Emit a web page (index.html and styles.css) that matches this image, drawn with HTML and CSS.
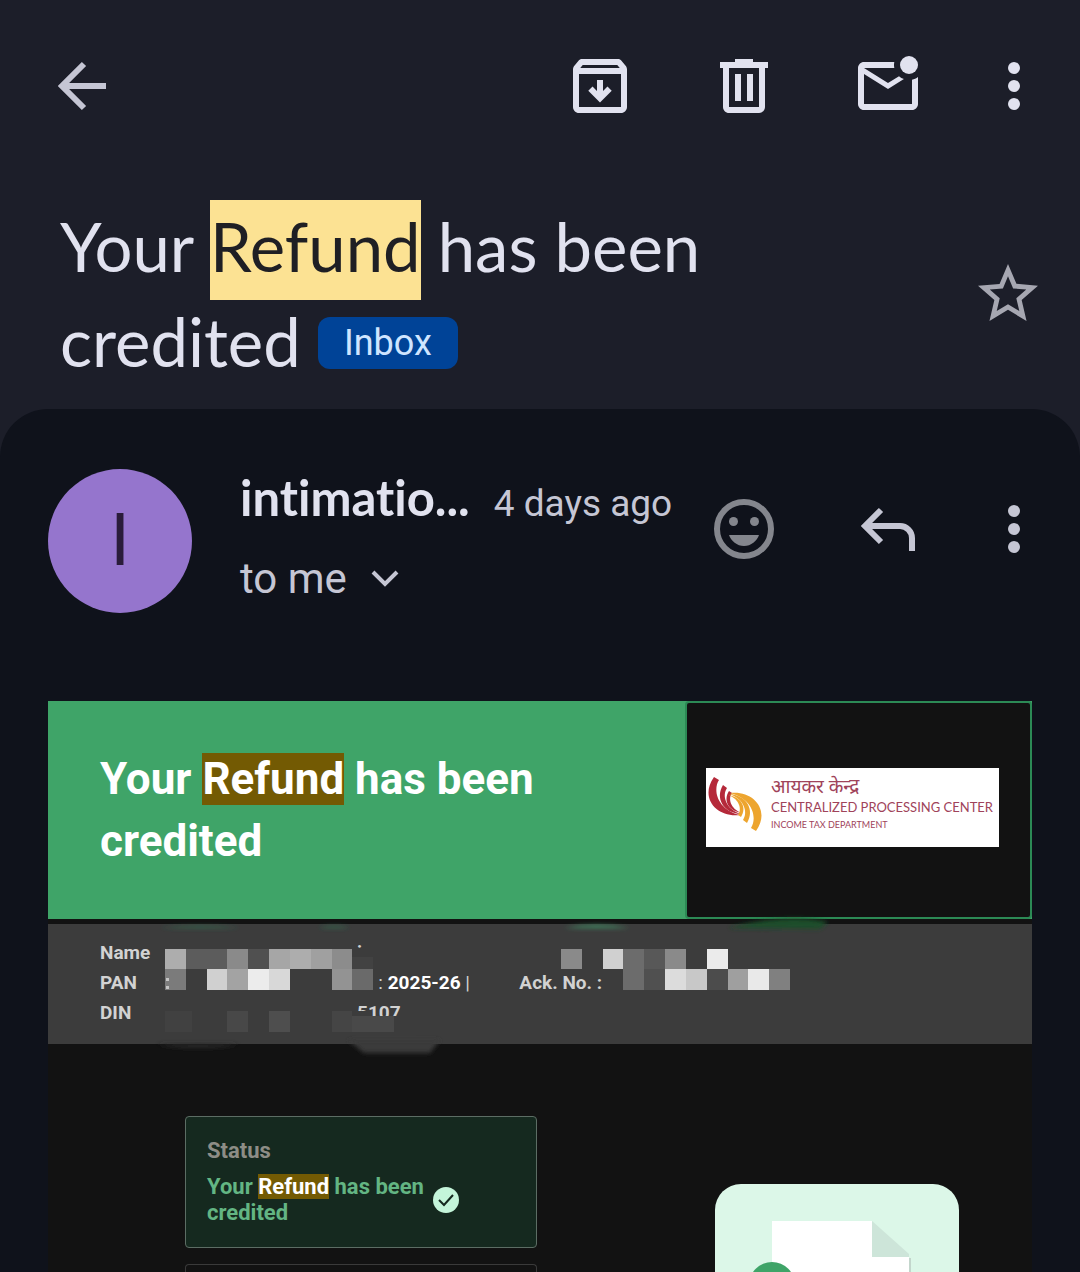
FILE: index.html
```html
<!DOCTYPE html>
<html lang="en">
<head>
  <meta charset="UTF-8">
  <meta name="viewport" content="width=device-width, initial-scale=1.0">
  <title>Your Refund has been credited</title>
  <link rel="stylesheet" href="styles.css">
</head>
<body>
  <header class="toolbar">
    <button class="icon-btn back" type="button" aria-label="Back">
      <svg viewBox="0 0 72 72" fill="none" stroke="currentColor" stroke-width="6"><path d="M58 36H15M36 14L14 36l22 22"/></svg>
    </button>
    <button class="icon-btn" type="button" aria-label="Archive">
      <svg viewBox="0 0 24 24" fill="currentColor"><path d="M20.54 5.23l-1.39-1.68C18.88 3.21 18.47 3 18 3H6c-.47 0-.88.21-1.16.55L3.46 5.23C3.17 5.57 3 6.02 3 6.5V19c0 1.1.9 2 2 2h14c1.1 0 2-.9 2-2V6.5c0-.48-.17-.93-.46-1.27zM6.24 5h11.52l.83 1H5.42l.82-1zM5 19V8h14v11H5z"/><path d="M12 10v6M8.8 12.9l3.2 3.2 3.2-3.2" fill="none" stroke="currentColor" stroke-width="2"/></svg>
    </button>
    <button class="icon-btn" type="button" aria-label="Delete">
      <svg viewBox="0 0 24 24" fill="currentColor"><path d="M15 4V3H9v1H4v2h1v13c0 1.1.9 2 2 2h10c1.1 0 2-.9 2-2V6h1V4h-5zm2 15H7V6h10v13zM9 8h2v9H9zm4 0h2v9h-2z"/></svg>
    </button>
    <button class="icon-btn" type="button" aria-label="Mark as unread">
      <svg viewBox="0 0 24 24" fill="currentColor"><path d="M22 8.98V18c0 1.1-.9 2-2 2H4c-1.1 0-2-.9-2-2V6c0-1.1.9-2 2-2h10.1c-.06.32-.1.66-.1 1 0 .34.04.68.1 1H4l8 5 3.67-2.29c.47.43 1.02.76 1.63.98L12 13 4 8v10h16V9.9c.74-.15 1.42-.48 2-.92z"/><circle cx="19" cy="5" r="3"/></svg>
    </button>
    <button class="icon-btn more" type="button" aria-label="More options">
      <svg viewBox="0 0 36 72" fill="currentColor"><circle cx="18" cy="18" r="6"/><circle cx="18" cy="36" r="6"/><circle cx="18" cy="54" r="6"/></svg>
    </button>
  </header>

  <section class="subject">
    <h1>Your <mark>Refund</mark> has been credited <span class="chip">Inbox</span></h1>
    <button class="icon-btn star" type="button" aria-label="Star">
      <svg viewBox="0 0 24 24" fill="currentColor"><path d="M22 9.24l-7.19-.62L12 2 9.19 8.63 2 9.24l5.46 4.73L5.82 21 12 17.27 18.18 21l-1.63-7.03L22 9.24zM12 15.4l-3.76 2.27 1-4.28-3.32-2.88 4.38-.38L12 6.1l1.71 4.04 4.38.38-3.32 2.88 1 4.28L12 15.4z"/></svg>
    </button>
  </section>

  <main class="message">
    <div class="sender">
      <div class="avatar">I</div>
      <div class="sender-info">
        <div class="sender-line">
          <strong>intimatio...</strong>
          <span class="date">4 days ago</span>
        </div>
        <button class="recipient" type="button">to me
          <svg viewBox="0 0 28 18" fill="none" stroke="currentColor" stroke-width="4"><path d="M2 2l12 12L26 2"/></svg>
        </button>
      </div>
      <div class="sender-actions">
        <button class="icon-btn react" type="button" aria-label="Add reaction">
          <svg viewBox="0 0 72 72" fill="currentColor"><circle cx="36" cy="36" r="27" fill="none" stroke="currentColor" stroke-width="6"/><circle cx="25.5" cy="28.5" r="4.5"/><circle cx="46.5" cy="28.5" r="4.5"/><path d="M21 42h30c-2 6-8 11-15 11s-13-5-15-11z"/></svg>
        </button>
        <button class="icon-btn" type="button" aria-label="Reply">
          <svg viewBox="0 0 72 72" fill="none" stroke="currentColor" stroke-width="6"><path d="M14 33h34a12 12 0 0 1 12 12v13M29 17L13 33l16 16"/></svg>
        </button>
        <button class="icon-btn more" type="button" aria-label="More message options">
          <svg viewBox="0 0 36 72" fill="currentColor"><circle cx="18" cy="18" r="6"/><circle cx="18" cy="36" r="6"/><circle cx="18" cy="54" r="6"/></svg>
        </button>
      </div>
    </div>

    <article class="mail">
      <div class="banner">
        <h2>Your <mark>Refund</mark> has been credited</h2>
        <div class="banner-logo">
          <div class="logo">
            <svg viewBox="0 0 60 72">
              <g fill="#b5293a">
                <path d="M8 9L13 12C7 21 10 41 34 47C11 50-7 30 8 9Z"/>
                <path d="M17 17L21 20C16 27 19 41 35 46C17 45 9 30 17 17Z"/>
                <path d="M23 23L26 25C22 30 24 41 36 45C22 43 17 32 23 23Z"/>
              </g>
              <g fill="#eda52f" transform="rotate(180 29 36)">
                <path d="M8 9L13 12C7 21 10 41 34 47C11 50-7 30 8 9Z"/>
                <path d="M17 17L21 20C16 27 19 41 35 46C17 45 9 30 17 17Z"/>
                <path d="M23 23L26 25C22 30 24 41 36 45C22 43 17 32 23 23Z"/>
              </g>
            </svg>
            <div class="logo-text">
              <span class="logo-hindi" lang="hi">आयकर केन्द्र</span>
              <span class="logo-name">CENTRALIZED PROCESSING CENTER</span>
              <span class="logo-dept">INCOME TAX DEPARTMENT</span>
            </div>
          </div>
        </div>
      </div>

      <div class="details">
        <div class="details-row"><span class="label">Name</span><span class="cut">ir</span></div>
        <div class="details-row"><span class="label">PAN</span><span>:</span><span class="year">: <b>2025-26</b> |</span><span>Ack. No. :</span></div>
        <div class="details-row"><span class="label">DIN</span><span class="cut">5107</span></div>
        <!-- personal details are masked -->
        <svg class="mask" viewBox="0 0 984 144" aria-hidden="true">
          <defs>
            <filter id="soft" x="-20%" y="-60%" width="140%" height="220%"><feGaussianBlur stdDeviation="2"/></filter>
          </defs>
          <g filter="url(#soft)">
            <path d="M112 14q40-4 80 0z" fill="#2f6e50"/>
            <path d="M270 14q16-4 32 0z" fill="#2f6e50"/>
            <path d="M516 14q32-6 66 0z" fill="#3c8f64"/>
            <path d="M680 14q60-16 100-6l-8 7z" fill="#1b4d2a"/>
            <path d="M108 130h84q-42 8-84 0z" fill="#2b2b2b"/>
            <path d="M300 126h92l-10 13h-66z" fill="#3a3a3a"/>
          </g>
          <g fill="#3c3c3c">
            <path d="M117 35h205v41H117z"/>
            <path d="M304 43h21v13h-21z"/>
            <path d="M290 97h30v20h-30zM308 102h60v20h-60z"/>
          </g>
          <g>
            <path d="M117 35h21v20h-21z" fill="#adadad"/>
            <path d="M138 35h41v20h-41z" fill="#5c5c5c"/>
            <path d="M179 35h21v20h-21z" fill="#8a8a8a"/>
            <path d="M200 35h21v20h-21z" fill="#505050"/>
            <path d="M221 35h21v20h-21z" fill="#a6a6a6"/>
            <path d="M242 35h21v20h-21z" fill="#adadad"/>
            <path d="M263 35h21v20h-21z" fill="#a0a0a0"/>
            <path d="M284 35h20v20h-20z" fill="#8c8c8c"/>
            <path d="M304 43h21v12h-21z" fill="#424242"/>
            <path d="M117 55h21v21h-21z" fill="#7b7b7b"/>
            <path d="M159 55h20v21h-20z" fill="#d0d0d0"/>
            <path d="M179 55h21v21h-21z" fill="#a3a3a3"/>
            <path d="M200 55h21v21h-21z" fill="#ececec"/>
            <path d="M221 55h21v21h-21z" fill="#d8d8d8"/>
            <path d="M284 55h20v21h-20z" fill="#939393"/>
            <path d="M304 55h21v21h-21z" fill="#6a6a6a"/>
            <path d="M117 97h27v21h-27z" fill="#414141"/>
            <path d="M179 97h21v21h-21z" fill="#484848"/>
            <path d="M221 97h21v21h-21z" fill="#4e4e4e"/>
            <path d="M284 97h20v21h-20z" fill="#454545"/>
            <path d="M304 102h42v16h-42z" fill="#494949"/>
          </g>
          <g>
            <path d="M513 35h21v20h-21z" fill="#8a8a8a"/>
            <path d="M555 35h20v20h-20z" fill="#d0d0d0"/>
            <path d="M575 35h21v41h-21z" fill="#6c6c6c"/>
            <path d="M596 35h21v20h-21z" fill="#585858"/>
            <path d="M617 35h21v20h-21z" fill="#8a8a8a"/>
            <path d="M659 35h21v20h-21z" fill="#ebebeb"/>
            <path d="M596 55h21v21h-21z" fill="#505050"/>
            <path d="M617 55h21v21h-21z" fill="#dcdcdc"/>
            <path d="M638 55h21v21h-21z" fill="#c8c8c8"/>
            <path d="M659 55h21v21h-21z" fill="#4c4c4c"/>
            <path d="M680 55h20v21h-20z" fill="#9f9f9f"/>
            <path d="M700 55h21v21h-21z" fill="#e9e9e9"/>
            <path d="M721 55h21v21h-21z" fill="#808080"/>
          </g>
          <path d="M118 64h3v3h-3zM118 72h3v3h-3z" fill="#c4c4c4"/>
        </svg>
      </div>

      <div class="content">
        <div class="cards">
          <div class="card status">
            <h3>Status</h3>
            <div class="status-line">
              <p>Your <mark>Refund</mark> has been<br>credited</p>
              <svg viewBox="0 0 26 26"><circle cx="13" cy="13" r="13" fill="#c4f5da"/><path d="M6 13l5 5 9-10" fill="none" stroke="#15291f" stroke-width="2"/></svg>
            </div>
          </div>
          <div class="card next"></div>
        </div>
        <svg class="illustration" viewBox="0 0 244 88">
          <path d="M0 88V26A26 26 0 0 1 26 0H218a26 26 0 0 1 26 26V88z" fill="#dcf7e8"/>
          <path d="M193 74h3v14h-3z" fill="#c3d6cc"/>
          <path d="M57 37h100v36h37v15H57z" fill="#fff"/>
          <path d="M157 37l37 33v3h-37z" fill="#cde5d9"/>
          <circle cx="57" cy="101" r="23" fill="#3fa468"/>
        </svg>
      </div>
    </article>
  </main>
</body>
</html>
```
FILE: styles.css
```css
:root {
  --surface: #1c1e29;
  --panel: #0f121b;
  --text: #e1e2ef;
  --muted: #c5c6d4;
  --green: #3fa468;
  --highlight: #735a03;
}
* {
  box-sizing: border-box;
}
body {
  margin: 0;
  background-color: var(--surface);
  color: var(--text);
  font-family: Roboto, Arial, sans-serif;
}
h1, h2, h3, p {
  margin: 0;
}
button {
  padding: 0;
  border: 0;
  background: none;
  color: inherit;
  font: inherit;
  cursor: pointer;
}
svg {
  display: block;
}

/* top bar */
.toolbar {
  display: flex;
  gap: 72px;
  padding: 50px 48px 0;
}
.icon-btn {
  flex: none;
  width: 72px;
  height: 72px;
}
.icon-btn svg {
  width: 100%;
  height: 100%;
}
.icon-btn.more {
  width: 36px;
}
.icon-btn.back {
  margin-right: auto;
  color: var(--muted);
}

/* subject */
.subject {
  display: flex;
  align-items: center;
  justify-content: space-between;
  gap: 48px;
  padding: 77px 36px 20px 60px;
}
.subject h1 {
  max-width: 740px;
  font-family: Lato, sans-serif;
  font-size: 67px;
  font-weight: 400;
  line-height: 95px;
}
.subject mark {
  padding: 6px 0 14px;
  background-color: #fce293;
  color: #1f1f24;
}
.chip {
  display: inline-block;
  padding: 0 26px;
  border-radius: 12px;
  background-color: #004397;
  color: #cfe5ff;
  font-family: Roboto, sans-serif;
  font-size: 36px;
  line-height: 52px;
  vertical-align: 12px;
}
.star {
  color: #a6a7b1;
}

/* message panel */
.message {
  padding: 60px 48px 0;
  border-radius: 48px 48px 0 0;
  background-color: var(--panel);
}
.sender {
  display: flex;
  height: 144px;
}
.avatar {
  flex: none;
  width: 144px;
  border-radius: 50%;
  background-color: #9575cd;
  color: #2a1c3a;
  font-size: 72px;
  line-height: 144px;
  text-align: center;
}
.sender-info {
  flex: 1;
  padding-left: 48px;
}
.sender-line {
  display: flex;
  align-items: baseline;
  gap: 24px;
  line-height: 56px;
  white-space: nowrap;
}
.sender-line strong {
  font-family: Lato, sans-serif;
  font-size: 49px;
  font-weight: 700;
  font-variant-ligatures: none;
}
.date {
  color: var(--muted);
  font-size: 37px;
}
.recipient {
  display: flex;
  align-items: center;
  gap: 24px;
  margin-top: 17px;
  color: var(--muted);
  font-size: 42px;
  line-height: 60px;
}
.recipient svg {
  width: 28px;
  height: 18px;
}
.sender-actions {
  display: flex;
  gap: 72px;
  padding-top: 24px;
  color: var(--muted);
}
.react {
  color: #84868d;
}

/* mail body */
.mail {
  margin-top: 88px;
  background-color: #121212;
}
.mail mark {
  background-color: var(--highlight);
  color: #fff;
}
.banner {
  display: flex;
  background-color: var(--green);
}
.banner h2 {
  flex: 1;
  padding: 47px 52px;
  color: #fff;
  font-size: 44px;
  line-height: 62px;
}
.banner-logo {
  display: flex;
  align-items: center;
  width: 347px;
  padding: 0 0 6px 19px;
  border: 2px solid #2c8a55;
  border-radius: 4px;
  background-color: #121212;
}
.logo {
  display: flex;
  width: 293px;
  height: 79px;
  background-color: #fff;
}
.logo svg {
  flex: none;
  width: 60px;
  height: 72px;
}
.logo-text {
  display: flex;
  flex-direction: column;
  padding: 7px 0 0 5px;
  color: #a0435a;
  font-family: Lato, sans-serif;
  white-space: nowrap;
}
.logo-hindi {
  font-family: "Noto Sans", sans-serif;
  font-size: 19px;
  line-height: 22px;
}
.logo-name {
  font-size: 13px;
  line-height: 20px;
}
.logo-dept {
  font-size: 9px;
  line-height: 16px;
}

/* tax payer details */
.details {
  position: relative;
  margin-top: 5px;
  padding: 14px 52px 16px;
  background-color: #3c3c3c;
  color: #d2d2d2;
  font-size: 19px;
  font-weight: 700;
}
.details-row {
  display: flex;
  height: 30px;
  line-height: 30px;
}
.label {
  width: 65px;
}
.year {
  width: 141px;
  margin-left: 208px;
  font-weight: 400;
}
.year b {
  color: #fff;
}
.cut {
  margin-left: 192px;
}
.mask {
  position: absolute;
  top: -10px;
  left: 0;
  width: 984px;
  height: 144px;
}

/* cards and illustration */
.content {
  display: flex;
  align-items: flex-end;
  justify-content: space-between;
  padding: 72px 73px 0 137px;
}
.cards {
  display: flex;
  flex-direction: column;
  gap: 16px;
  width: 352px;
}
.card {
  padding: 21px;
  border: 1px solid #3a3a3a;
  border-radius: 4px;
}
.card.next {
  height: 8px;
  padding: 0;
  border-bottom: 0;
  border-radius: 4px 4px 0 0;
}
.status {
  height: 132px;
  border-color: #5c6d64;
  background-color: #15291f;
}
.status h3 {
  margin-bottom: 10px;
  color: #8d8d86;
  font-size: 22px;
  font-weight: 700;
  line-height: 26px;
}
.status-line {
  display: flex;
  align-items: center;
  gap: 9px;
  color: #63b583;
  font-size: 22px;
  font-weight: 700;
  line-height: 26px;
  white-space: nowrap;
}
.status-line svg {
  width: 26px;
  height: 26px;
}
.illustration {
  width: 244px;
  height: 88px;
}
```
